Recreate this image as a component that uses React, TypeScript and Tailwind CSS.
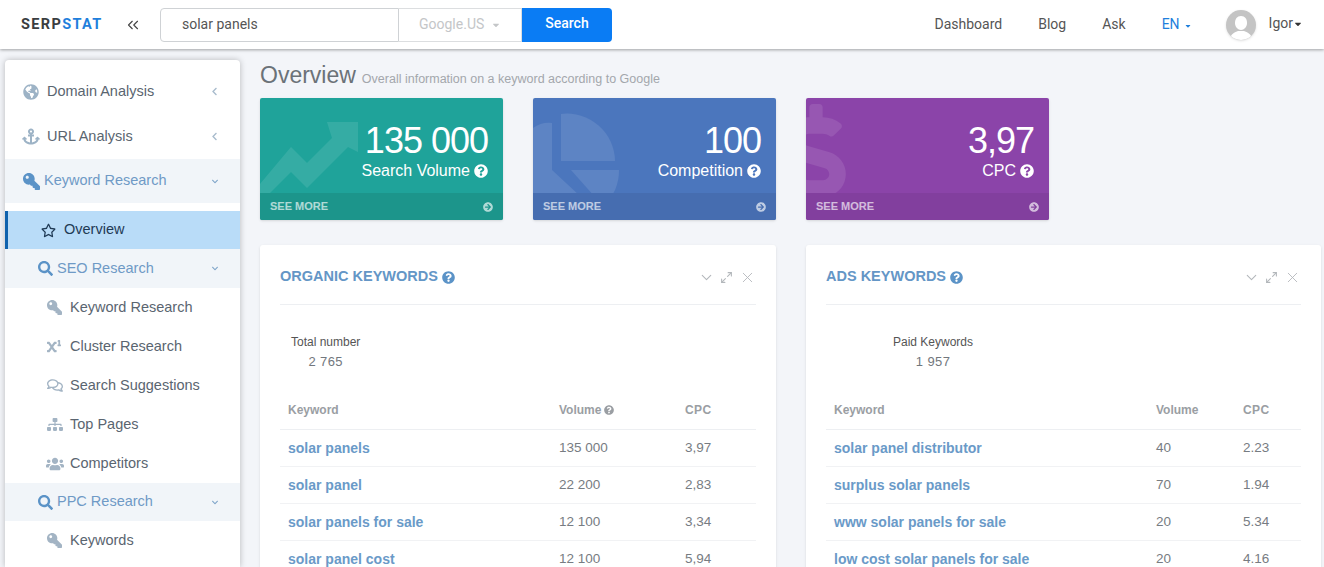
import { ReactNode } from "react";
import {
  FaAnchor,
  FaArrowCircleRight,
  FaCaretDown,
  FaChevronDown,
  FaChevronLeft,
  FaDollarSign,
  FaGlobeAmericas,
  FaKey,
  FaQuestionCircle,
  FaRegComments,
  FaRegStar,
  FaSearch,
  FaSitemap,
  FaSuperscript,
  FaUsers,
} from "react-icons/fa";
import { ChevronDown, ChevronsLeft, Maximize2, X } from "lucide-react";

const TrendArt = () => (
  <svg viewBox="0 0 100 72" className="absolute left-0 top-[24px] w-[100px] h-[72px] text-white/10" fill="currentColor">
    <path d="M0 62 L31 25 L47 41 L72 16 L67 0 L98 0 L98 30 L88 25 L47 66 L31 50 L10 71 L0 71 Z" />
  </svg>
);

const PieArt = () => (
  <svg viewBox="0 0 90 100" className="absolute left-0 top-[8px] w-[90px] h-[100px] text-white/10" fill="currentColor">
    <path d="M28 8 A48 48 0 0 1 82 55 L28 55 Z" />
    <path d="M0 22 A35 48 0 0 1 19 17 L19 64 L62 104 L0 104 Z" />
    <path d="M38 64 L86 64 A48 48 0 0 1 70 100 Z" />
  </svg>
);

const StatCard = ({ value, label, bg, foot, art }: { value: string; label: string; bg: string; foot: string; art: ReactNode }) => (
  <div className={`relative w-[243px] h-[122px] rounded-[2px] overflow-hidden text-white shadow-sm ${bg}`}>
    {art}
    <div className="relative h-[95px] pr-[15px] pt-[21px] flex flex-col items-end">
      <div className="text-[36px] leading-[44px] tracking-[-1px]">{value}</div>
      <div className="text-[16px] leading-[18px] flex items-center gap-[4px] -mt-[1px]">
        {label} <FaQuestionCircle className="w-[14px] h-[14px]" />
      </div>
    </div>
    <div className={`relative h-[27px] pl-[10px] pr-[10px] flex items-center justify-between text-[11px] font-bold text-white/65 ${foot}`}>
      <span>SEE MORE</span>
      <FaArrowCircleRight className="w-[10px] h-[10px]" />
    </div>
  </div>
);

const TopItem = ({ icon, label }: { icon: ReactNode; label: string }) => (
  <div className="h-[45px] flex items-center pl-[18px] pr-[22px] text-[14.5px] text-[#5a6570]">
    <span className="w-[24px] flex text-[#9db3c6]">{icon}</span>
    <span className="ml-[0px] flex-1">{label}</span>
    <FaChevronLeft className="w-[7px] h-[9px] text-[#a9bccd]" />
  </div>
);

const Band = ({ icon, label, h, pl }: { icon: ReactNode; label: string; h: string; pl: string }) => (
  <div className={`flex items-center bg-[#f1f5f9] pr-[20px] text-[14.5px] text-[#6f9ac6] ${h} ${pl}`}>
    <span className="flex text-[#5b93c7] mr-[4px]">{icon}</span>
    <span className="flex-1">{label}</span>
    <FaChevronDown className="w-[10px] h-[7px] text-[#7fa5c9]" />
  </div>
);

const SubItem = ({ icon, label }: { icon: ReactNode; label: string }) => (
  <div className="h-[39px] flex items-center pl-[42px] text-[14.5px] text-[#5a6570]">
    <span className="w-[23px] flex text-[#a3b4c4]">{icon}</span>
    {label}
  </div>
);

const Sidebar = () => (
  <aside className="w-[235px] h-[507px] ml-[5px] mt-[11px] shrink-0 bg-white rounded-t-[4px] shadow-[0_0_6px_rgba(0,0,0,0.25)] overflow-hidden pt-[9px]">
    <TopItem icon={<FaGlobeAmericas className="w-[16px] h-[16px]" />} label="Domain Analysis" />
    <TopItem icon={<FaAnchor className="w-[18px] h-[17px] -ml-[1px]" />} label="URL Analysis" />
    <Band icon={<FaKey className="w-[17px] h-[17px] -scale-x-100" />} label="Keyword Research" h="h-[44px]" pl="pl-[18px]" />
    <div className="h-[8px]" />
    <div className="h-[38px] flex items-center bg-[#b9dcf8] border-l-[3px] border-[#0f62ad] pl-[33px] text-[14.5px] text-[#1f3a55]">
      <FaRegStar className="w-[15px] h-[15px] mr-[8px]" />
      Overview
    </div>
    <Band icon={<FaSearch className="w-[15px] h-[15px]" />} label="SEO Research" h="h-[39px]" pl="pl-[33px]" />
    <SubItem icon={<FaKey className="w-[15px] h-[15px] -scale-x-100" />} label="Keyword Research" />
    <SubItem icon={<FaSuperscript className="w-[14px] h-[14px]" />} label="Cluster Research" />
    <SubItem icon={<FaRegComments className="w-[16px] h-[15px]" />} label="Search Suggestions" />
    <SubItem icon={<FaSitemap className="w-[16px] h-[15px]" />} label="Top Pages" />
    <SubItem icon={<FaUsers className="w-[18px] h-[16px] -ml-[1px]" />} label="Competitors" />
    <Band icon={<FaSearch className="w-[15px] h-[15px]" />} label="PPC Research" h="h-[38px]" pl="pl-[33px]" />
    <SubItem icon={<FaKey className="w-[15px] h-[15px] -scale-x-100" />} label="Keywords" />
  </aside>
);

type Row = [string, string, string];

const Panel = ({
  title,
  statLabel,
  statValue,
  statClass,
  cols,
  volumeHelp,
  rows,
}: {
  title: string;
  statLabel: string;
  statValue: string;
  statClass: string;
  cols: string;
  volumeHelp?: boolean;
  rows: Row[];
}) => (
  <section className="bg-white rounded-t-[3px] shadow-sm h-[330px] px-[20px]">
    <div className="h-[60px] border-b border-[#edeff2] flex items-center justify-between pt-[5px]">
      <h2 className="flex items-center gap-[4px] text-[14.5px] font-bold text-[#6496c6]">
        {title} <FaQuestionCircle className="w-[13px] h-[13px] text-[#5b93c7]" />
      </h2>
      <div className="flex items-center gap-[5px] text-[#b3b7bb]">
        <ChevronDown className="w-[17px] h-[17px]" strokeWidth={1.5} />
        <Maximize2 className="w-[13px] h-[13px]" strokeWidth={2} />
        <X className="w-[17px] h-[17px] ml-[1px]" strokeWidth={1.25} />
      </div>
    </div>
    <div className={`mt-[27px] h-[40px] flex flex-col items-center w-max ${statClass}`}>
      <div className="text-[12px] leading-[20px] text-[#555]">{statLabel}</div>
      <div className="text-[13px] leading-[20px] tracking-[0.4px] text-[#72777d]">{statValue}</div>
    </div>
    <div className={`mt-[21px] h-[37px] grid items-center border-b border-[#edeff2] pb-[2px] px-[8px] text-[12px] font-bold text-[#9a9ea3] ${cols}`}>
      <span>Keyword</span>
      <span className="flex items-center gap-[3px]">
        Volume {volumeHelp && <FaQuestionCircle className="w-[10px] h-[10px]" />}
      </span>
      <span className="tracking-[0.4px]">CPC</span>
    </div>
    {rows.map((r) => (
      <div key={r[0]} className={`h-[37px] grid items-center border-b border-[#f1f2f4] px-[8px] ${cols}`}>
        <span className="text-[14px] font-bold text-[#6a9ac8]">{r[0]}</span>
        <span className="text-[13.5px] text-[#777c82]">{r[1]}</span>
        <span className="text-[13.5px] text-[#777c82]">{r[2]}</span>
      </div>
    ))}
  </section>
);

export default function App() {
  return (
    <div className="h-[567px] overflow-hidden bg-[#f3f5f9] font-['Liberation_Sans',Arial,sans-serif]">
      <header className="relative z-10 h-[49px] bg-white shadow-[0_1px_3px_rgba(0,0,0,0.35)] flex items-center font-['Roboto',sans-serif] text-[14px]">
        <div className="ml-[21px] w-[84px] text-[14.5px] font-bold tracking-[1.35px] font-['Roboto',sans-serif] text-[#3a3d40] whitespace-nowrap">
          SERP<span className="text-[#1f7fdc]">STAT</span>
        </div>
        <ChevronsLeft className="ml-[19px] w-[18px] h-[18px] text-[#444]" strokeWidth={1.5} />
        <div className="ml-[18px] flex w-[452px] h-[34px]">
          <div className="w-[239px] border border-[#cfd2d5] rounded-l-[4px] pl-[21px] flex items-center text-[#555]">solar panels</div>
          <div className="w-[123px] border-y border-r border-[#dcdee0] pl-[20px] flex items-center text-[#c4c6c8]">
            Google.US
            <FaCaretDown className="ml-[7px] w-[10px] h-[10px]" />
          </div>
          <div className="flex-1 bg-[#0a7cf4] text-white font-medium rounded-r-[4px] flex items-center justify-center pb-[2px]">Search</div>
        </div>
        <nav className="ml-auto flex items-center text-[#555]">
          <span>Dashboard</span>
          <span className="ml-[36px]">Blog</span>
          <span className="ml-[36px]">Ask</span>
          <span className="ml-[36px] flex items-center text-[#1f7fdc]">
            EN <FaCaretDown className="ml-[4px] w-[8px] h-[8px] mt-[3px]" />
          </span>
          <span className="ml-[34px] w-[30px] h-[30px] rounded-full bg-[#c4c4c4] overflow-hidden shadow-sm">
            <svg viewBox="0 0 30 30" className="w-[30px] h-[30px]" fill="#fff">
              <path d="M15 6 C19 6 21 9 21 13 C21 17 18 20 15 20 C12 20 9 17 9 13 C9 9 11 6 15 6 Z" />
              <path d="M4 30 C4 24 9 22 12 21 L18 21 C21 22 26 24 26 30 Z" />
            </svg>
          </span>
          <span className="ml-[13px] mr-[21px] flex items-center -mt-[2px]">
            Igor <FaCaretDown className="w-[10px] h-[10px] text-[#333]" />
          </span>
        </nav>
      </header>
      <div className="flex">
        <Sidebar />
        <main className="ml-[20px] flex-1 pr-[3px]">
          <div className="h-[49px] flex items-baseline pt-[11px]">
            <h1 className="text-[23px] leading-[30px] text-[#6b7278]">Overview</h1>
            <span className="ml-[6px] text-[12.5px] text-[#a3a7ac]">Overall information on a keyword according to Google</span>
          </div>
          <div className="flex gap-[30px]">
            <StatCard value="135 000" label="Search Volume" bg="bg-[#1fa39a]" foot="bg-[#1c958b]" art={<TrendArt />} />
            <StatCard value="100" label="Competition" bg="bg-[#4b76bd]" foot="bg-[#466db0]" art={<PieArt />} />
            <StatCard
              value="3,97"
              label="CPC"
              bg="bg-[#8b44a9]"
              foot="bg-[#823f9e]"
              art={<FaDollarSign className="absolute -left-[22px] top-[6px] w-[64px] h-[106px] text-white/10" />}
            />
          </div>
          <div className="mt-[25px] grid grid-cols-[516px_515px] gap-[30px]">
            <Panel
              title="ORGANIC KEYWORDS"
              statLabel="Total number"
              statValue="2 765"
              statClass="ml-[11px]"
              cols="grid-cols-[271px_126px_1fr]"
              volumeHelp
              rows={[
                ["solar panels", "135 000", "3,97"],
                ["solar panel", "22 200", "2,83"],
                ["solar panels for sale", "12 100", "3,34"],
                ["solar panel cost", "12 100", "5,94"],
              ]}
            />
            <Panel
              title="ADS KEYWORDS"
              statLabel="Paid Keywords"
              statValue="1 957"
              statClass="ml-[67px]"
              cols="grid-cols-[322px_87px_1fr]"
              rows={[
                ["solar panel distributor", "40", "2.23"],
                ["surplus solar panels", "70", "1.94"],
                ["www solar panels for sale", "20", "5.34"],
                ["low cost solar panels for sale", "20", "4.16"],
              ]}
            />
          </div>
        </main>
      </div>
    </div>
  );
}
